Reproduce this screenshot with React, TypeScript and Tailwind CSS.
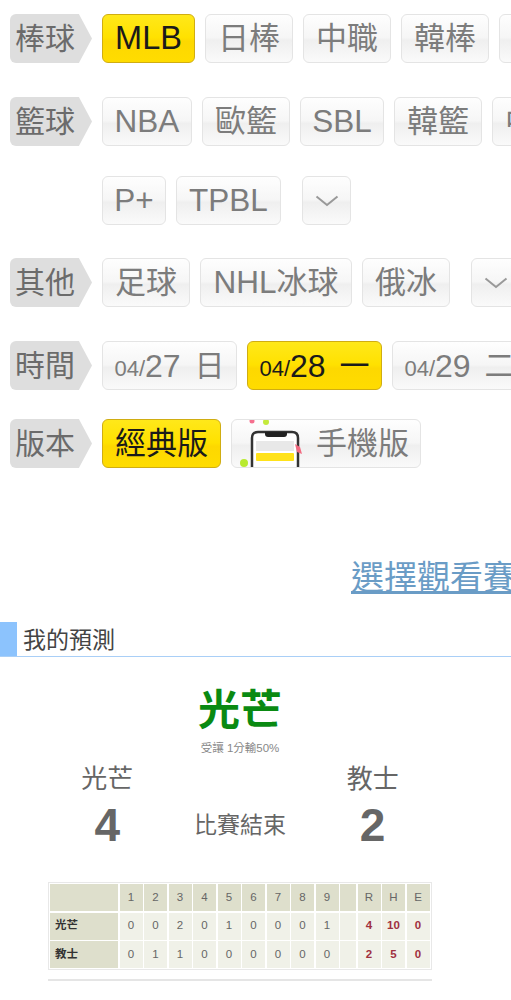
const BTN =
  "flex h-[49px] shrink-0 items-center justify-center whitespace-nowrap rounded-[6px] border border-[#e4e4e4] bg-[linear-gradient(180deg,#fefefe_0%,#f6f6f6_48%,#efefef_54%,#fafafa_100%)] text-[31px] leading-none text-[#7c7c7c]";
const ACTIVE =
  "flex h-[49px] shrink-0 items-center justify-center whitespace-nowrap rounded-[6px] border border-[#d0ad12] bg-[linear-gradient(180deg,#ffe81a_0%,#ffe100_48%,#fdd800_56%,#ffdc00_100%)] text-[31px] leading-none text-[#1a1a1a]";

function Tag({ label }: { label: string }) {
  return (
    <div className="flex h-[49px] w-[82px] shrink-0 items-center rounded-l-[6px] bg-[#dedede] pl-[5px] text-[30px] leading-none text-[#6b6b6b] [clip-path:polygon(0_0,84%_0,100%_50%,84%_100%,0_100%)]">
      {label}
    </div>
  );
}

function Latin({ children }: { children: string }) {
  return <span className="text-[31.5px]">{children}</span>;
}

function Chevron() {
  return (
    <svg width="24" height="14" viewBox="0 0 24 14" fill="none" className="shrink-0">
      <path d="M1.5 2.5l10.5 8.5 10.5-8.5" stroke="#999" strokeWidth="2" />
    </svg>
  );
}

function DateBtn({ md, day, week, active }: { md: string; day: string; week: string; active?: boolean }) {
  return (
    <div className={`${active ? ACTIVE : BTN} w-[135px]`}>
      <span className="pt-[6px] text-[22px]">{md}/</span>
      <span className="text-[32px]">{day}</span>
      <span className="ml-[14px] text-[30px]">{week}</span>
    </div>
  );
}

function PhoneArt() {
  return (
    <svg width="72" height="48" viewBox="0 0 72 48" className="shrink-0">
      <path d="M20 48V18q0-6 6-6h34q6 0 6 6v30" fill="#fff" stroke="#333" strokeWidth="2.5" />
      <path d="M33 12h22v2q0 3-3 3H36q-3 0-3-3z" fill="#222" />
      <rect x="24" y="21" width="38" height="10" fill="#e8e8e8" />
      <rect x="24" y="33" width="38" height="8" rx="1" fill="#ffe21a" />
      <circle cx="12" cy="43" r="4" fill="#b8ea2f" />
      <circle cx="34" cy="2" r="3" fill="#c4ea3c" />
      <circle cx="20" cy="1" r="2.5" fill="#f56f8e" />
      <path d="M63 24l5 3 2 7-5-2z" fill="#f26a80" />
    </svg>
  );
}

const HEAD = ["", "1", "2", "3", "4", "5", "6", "7", "8", "9", "", "R", "H", "E"];
const ROWS = [
  ["光芒", "0", "0", "2", "0", "1", "0", "0", "0", "1", "", "4", "10", "0"],
  ["教士", "0", "1", "1", "0", "0", "0", "0", "0", "0", "", "2", "5", "0"],
];

function ScoreTable() {
  return (
    <div className="border border-[#e8e8e8] bg-white p-[1px]">
      <div className="grid grid-cols-[68px_repeat(9,23px)_16px_repeat(3,23px)] gap-[1.5px] text-[11.5px] text-[#666]">
        {HEAD.map((h, i) => (
          <div key={i} className="flex h-[27px] items-center justify-center bg-[#dedfcc]">
            {h}
          </div>
        ))}
        {ROWS.map((row) =>
          row.map((c, i) =>
            i === 0 ? (
              <div key={i} className="flex h-[27px] items-center bg-[#dedfcc] pl-[5px] font-bold text-[#333]">
                {c}
              </div>
            ) : (
              <div
                key={i}
                className={`flex h-[27px] items-center justify-center bg-[#f0f1e8] ${i > 10 ? "font-bold text-[#a03040]" : ""}`}
              >
                {c}
              </div>
            )
          )
        )}
      </div>
    </div>
  );
}

export default function App() {
  return (
    <div className="w-[511px] overflow-hidden bg-white pt-[14px] font-['Liberation_Sans','Noto_Sans_CJK_TC',sans-serif]">
      <div className="flex gap-[10px] pl-[10px]">
        <Tag label="棒球" />
        <div className={`${ACTIVE} w-[93px]`}>
          <span className="text-[32.5px]">MLB</span>
        </div>
        <div className={`${BTN} w-[88px]`}>日棒</div>
        <div className={`${BTN} w-[88px]`}>中職</div>
        <div className={`${BTN} w-[88px]`}>韓棒</div>
        <div className={`${BTN} w-[88px]`}>美職</div>
      </div>

      <div className="mt-[34px] flex gap-[10px] pl-[10px]">
        <Tag label="籃球" />
        <div className={`${BTN} w-[90px]`}>
          <Latin>NBA</Latin>
        </div>
        <div className={`${BTN} w-[88px]`}>歐籃</div>
        <div className={`${BTN} w-[84px]`}>
          <Latin>SBL</Latin>
        </div>
        <div className={`${BTN} w-[88px]`}>韓籃</div>
        <div className={`${BTN} w-[88px]`}>中籃</div>
      </div>

      <div className="mt-[30px] flex gap-[10px] pl-[102px]">
        <div className={`${BTN} w-[64px]`}>
          <Latin>P+</Latin>
        </div>
        <div className={`${BTN} w-[105px]`}>
          <Latin>TPBL</Latin>
        </div>
        <div className={`${BTN} ml-[11px] w-[49px]`}>
          <Chevron />
        </div>
      </div>

      <div className="mt-[33px] flex gap-[10px] pl-[10px]">
        <Tag label="其他" />
        <div className={`${BTN} w-[88px]`}>足球</div>
        <div className={`${BTN} w-[152px]`}>
          <Latin>NHL</Latin>冰球
        </div>
        <div className={`${BTN} w-[88px]`}>俄冰</div>
        <div className={`${BTN} ml-[11px] w-[49px]`}>
          <Chevron />
        </div>
      </div>

      <div className="mt-[34px] flex gap-[10px] pl-[10px]">
        <Tag label="時間" />
        <DateBtn md="04" day="27" week="日" />
        <DateBtn md="04" day="28" week="一" active />
        <DateBtn md="04" day="29" week="二" />
      </div>

      <div className="mt-[29px] flex gap-[10px] pl-[10px]">
        <Tag label="版本" />
        <div className={`${ACTIVE} w-[119px]`}>經典版</div>
        <div className={`${BTN} w-[190px] justify-start gap-[12px] overflow-hidden`}>
          <PhoneArt />
          手機版
        </div>
      </div>

      <div className="mt-[90px] h-[40px] whitespace-nowrap pl-[351px] text-[33px] leading-[40px] text-[#6a9cc6] underline">
        選擇觀看賽事
      </div>

      <div className="mt-[24px] flex h-[35px] border-b border-[#a9cff7]">
        <div className="w-[17px] bg-[#8cc3fd]" />
        <div className="pl-[6px] text-[23px] leading-[37px] text-[#444]">我的預測</div>
      </div>

      <div className="flex w-[480px] flex-col items-center">
        <div className="mt-[29px] text-[42px] font-bold leading-[50px] text-[#0a8a12]">光芒</div>
        <div className="mt-[5px] text-[11.5px] leading-[14px] text-[#888]">受讓 1分輸50%</div>
        <div className="mt-[6px] grid w-[398px] grid-cols-3 items-center text-center text-[#666]">
          <div className="text-[26px] leading-[36px]">光芒</div>
          <div />
          <div className="text-[26px] leading-[36px]">教士</div>
          <div className="text-[46px] font-bold leading-[56px]">4</div>
          <div className="text-[23px] leading-[56px]">比賽結束</div>
          <div className="text-[46px] font-bold leading-[56px]">2</div>
        </div>
        <div className="mt-[29px] w-[384px]">
          <ScoreTable />
          <div className="mt-[9px] h-[2px] bg-[#e5e5e5]" />
        </div>
      </div>
      <div className="h-[19px]" />
    </div>
  );
}
